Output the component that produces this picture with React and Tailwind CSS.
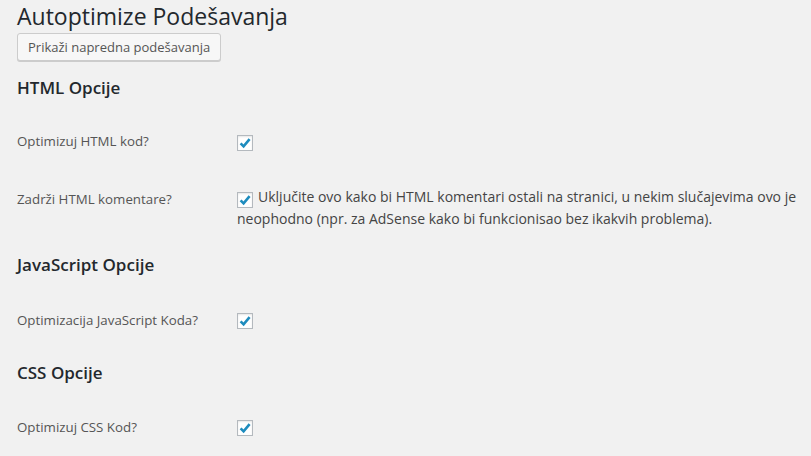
import React from "react";

function Checkbox({ className = "" }) {
    return (
        <span
            className={`h-[16px] w-[16px] shrink-0 items-center justify-center border border-[#b4b9be] bg-white shadow-[inset_0_1px_2px_rgba(0,0,0,0.1)] ${className}`}
        >
            <svg width="14" height="14" viewBox="0 0 14 14">
                <path
                    d="M2.6 7.4 L5.6 10.4 L11.6 3.2"
                    fill="none"
                    stroke="#1e8cbe"
                    strokeWidth="2.6"
                    strokeLinejoin="miter"
                />
            </svg>
        </span>
    );
}

function Row({ label, mt, labelPt = 0, children }) {
    return (
        <div className="flex items-start" style={{ marginTop: mt }}>
            <div
                className="w-[220px] shrink-0 text-[13.3px] leading-[21px] text-[#555]"
                style={{ paddingTop: labelPt }}
            >
                {label}
            </div>
            <div className="flex flex-1 items-start pr-[8px]">{children}</div>
        </div>
    );
}

export default function App() {
    return (
        <div
            className="min-h-[456px] bg-[#f1f1f1] pl-[17px]"
            style={{ fontFamily: '"Open Sans", "Noto Sans", sans-serif' }}
        >
            <h1 className="pt-[2px] text-[23px] font-normal leading-[29px] text-[#23282d]">
                Autoptimize Podešavanja
            </h1>
            <button className="mt-[2px] h-[28px] rounded-[3px] border border-[#ccc] bg-[#f7f7f7] px-[10px] text-[13px] leading-[26px] text-[#555] shadow-[0_1px_0_#ccc]">
                Prikaži napredna podešavanja
            </button>

            {/* HTML */}
            <h2 className="mt-[15px] text-[17px] font-semibold leading-[24px] text-[#23282d]">
                HTML Opcije
            </h2>
            <Row label="Optimizuj HTML kod?" mt={31}>
                <Checkbox className="mt-[4px] flex" />
            </Row>
            <Row label="Zadrži HTML komentare?" mt={34} labelPt={3}>
                <p className="text-[14px] leading-[21px] text-[#444]">
                    <Checkbox className="mr-[5px] inline-flex align-[-5px]" />
                    Uključite ovo kako bi HTML komentari ostali na stranici, u nekim slučajevima ovo je neophodno (npr. za AdSense kako bi funkcionisao bez ikakvih problema).
                </p>
            </Row>

            {/* JavaScript */}
            <h2 className="mt-[24px] text-[17px] font-semibold leading-[24px] text-[#23282d]">
                JavaScript Opcije
            </h2>
            <Row label="Optimizacija JavaScript Koda?" mt={33}>
                <Checkbox className="mt-[3px] flex" />
            </Row>

            {/* CSS */}
            <h2 className="mt-[30px] text-[17px] font-semibold leading-[24px] text-[#23282d]">
                CSS Opcije
            </h2>
            <Row label="Optimizuj CSS Kod?" mt={32}>
                <Checkbox className="mt-[3px] flex" />
            </Row>
        </div>
    );
}
